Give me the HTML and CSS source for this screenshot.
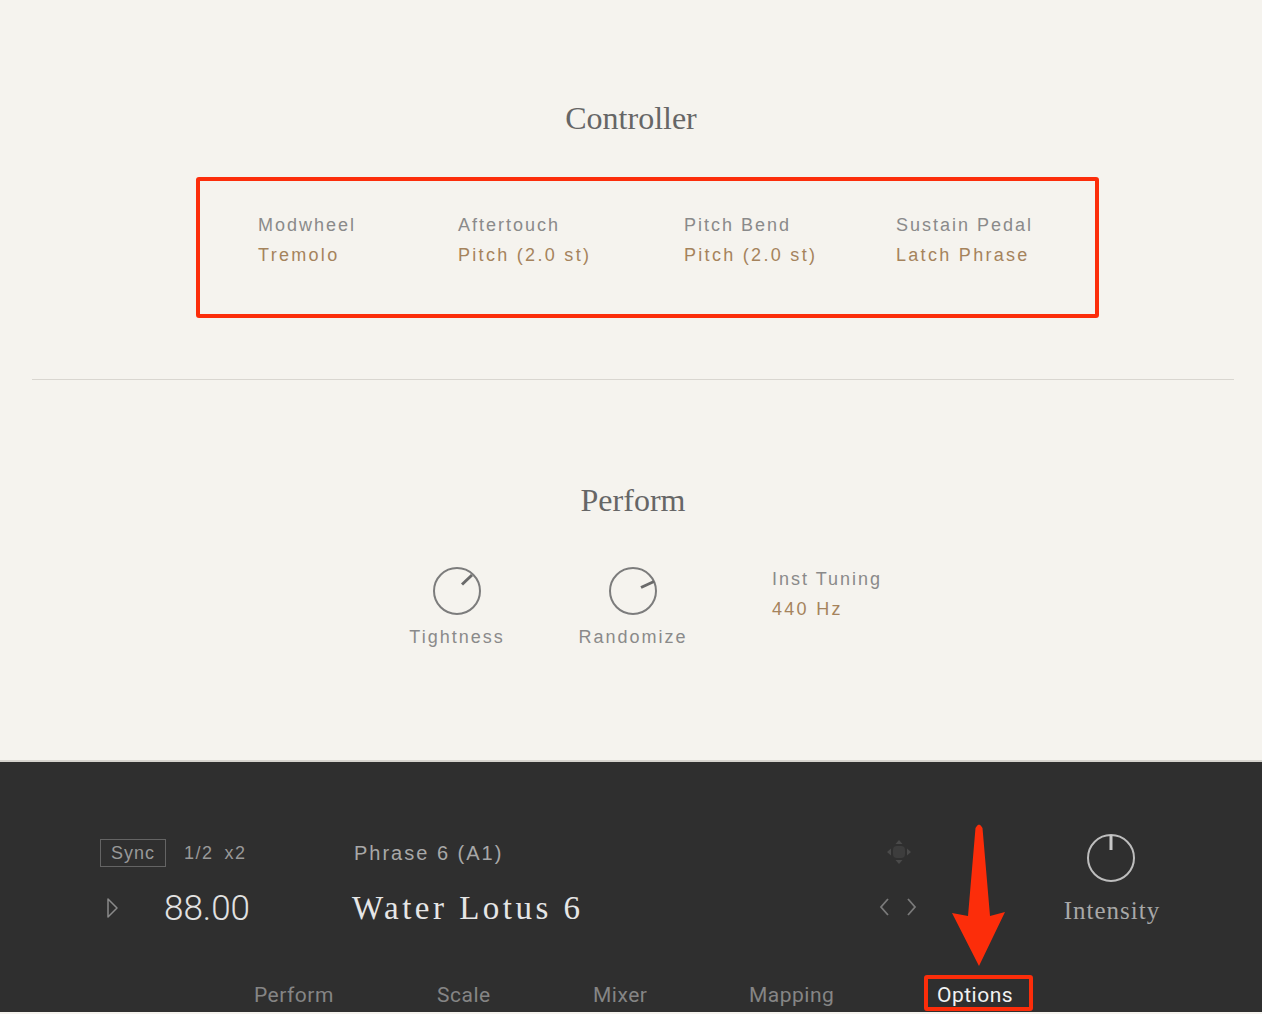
FILE: index.html
```html
<!DOCTYPE html>
<html lang="en">
<head>
<meta charset="UTF-8">
<meta name="viewport" content="width=device-width, initial-scale=1.0">
<title>Options</title>
<link rel="stylesheet" href="styles.css">
</head>
<body>

<div class="options">
  <h2 class="section-title">Controller</h2>

  <!-- MIDI controller assignments -->
  <div class="controllers">
    <div class="param">
      <div class="param-label">Modwheel</div>
      <div class="param-value">Tremolo</div>
    </div>
    <div class="param">
      <div class="param-label">Aftertouch</div>
      <div class="param-value">Pitch (2.0 st)</div>
    </div>
    <div class="param">
      <div class="param-label">Pitch Bend</div>
      <div class="param-value">Pitch (2.0 st)</div>
    </div>
    <div class="param">
      <div class="param-label">Sustain Pedal</div>
      <div class="param-value">Latch Phrase</div>
    </div>
  </div>

  <hr class="divider">

  <h2 class="section-title perform-title">Perform</h2>

  <div class="perform-row">
    <div class="knob">
      <svg width="52" height="52" viewBox="0 0 52 52">
        <circle cx="26" cy="27" r="23" fill="none" stroke="#7c7c7c" stroke-width="2"/>
        <line x1="31" y1="20.5" x2="41" y2="11" stroke="#6a6a6a" stroke-width="3"/>
      </svg>
      <div class="knob-label">Tightness</div>
    </div>
    <div class="knob knob-second">
      <svg width="52" height="52" viewBox="0 0 52 52">
        <circle cx="26" cy="27" r="23" fill="none" stroke="#7c7c7c" stroke-width="2"/>
        <line x1="34" y1="23.5" x2="47" y2="17.5" stroke="#6a6a6a" stroke-width="3"/>
      </svg>
      <div class="knob-label">Randomize</div>
    </div>
    <div class="param tuning">
      <div class="param-label">Inst Tuning</div>
      <div class="param-value">440 Hz</div>
    </div>
  </div>
</div>

<div class="panel">
  <div class="panel-top">
    <div class="transport">
      <div class="row-small">
        <span class="sync">Sync</span>
        <span class="rate">1/2</span>
        <span class="rate rate-mult">x2</span>
      </div>
      <div class="row-large">
        <svg class="play" width="14" height="22" viewBox="0 0 14 22">
          <path d="M2,2 L11,11 L2,20 Z" fill="none" stroke="#8a8a8a" stroke-width="1.5" stroke-linejoin="round"/>
        </svg>
        <span class="tempo">88.00</span>
      </div>
    </div>

    <div class="phrase">
      <div class="row-small phrase-name">Phrase 6 (A1)</div>
      <div class="row-large phrase-title">Water Lotus 6</div>
    </div>

    <div class="nav">
      <div class="row-small">
        <!-- move handle: rounded pad with four arrowheads -->
        <svg width="30" height="30" viewBox="0 0 30 30">
          <rect x="9" y="9" width="12" height="12" rx="4" fill="#3d3d3d"/>
          <path d="M15,3 L18.5,7 L11.5,7 Z M15,27 L18.5,23 L11.5,23 Z M3,15 L7,11.5 L7,18.5 Z M27,15 L23,11.5 L23,18.5 Z" fill="#4a4a4a"/>
        </svg>
      </div>
      <div class="row-large">
        <svg width="40" height="22" viewBox="0 0 40 22">
          <path d="M9,3 L2,11 L9,19" fill="none" stroke="#7a7a7a" stroke-width="1.8"/>
          <path d="M29,3 L36,11 L29,19" fill="none" stroke="#7a7a7a" stroke-width="1.8"/>
        </svg>
      </div>
    </div>

    <div class="intensity">
      <svg width="50" height="50" viewBox="0 0 50 50">
        <circle cx="25" cy="25" r="23" fill="none" stroke="#bdbdbd" stroke-width="2"/>
        <line x1="25" y1="2" x2="25" y2="17" stroke="#c8c8c8" stroke-width="3"/>
      </svg>
      <div class="intensity-label">Intensity</div>
    </div>
  </div>

  <nav class="tabs">
    <span class="tab">Perform</span>
    <span class="tab">Scale</span>
    <span class="tab">Mixer</span>
    <span class="tab">Mapping</span>
    <span class="tab tab-active">Options<span class="highlight"></span></span>
  </nav>

  <!-- callout arrow pointing at the Options tab -->
  <svg class="callout-arrow" width="62" height="150" viewBox="0 0 62 150">
    <path d="M27.5,8 Q31,1 34.5,8 L42,96 L57,92 L31,146 L4,93 L20,96 Z" fill="#fc2d0a"/>
  </svg>
</div>

</body>
</html>
```

FILE: styles.css
```css
body {
  margin: 0;
  padding: 0;
  background-color: #f5f3ee;
  font-family: "Liberation Sans", Arial, sans-serif;
}
.options {
  height: 760px;
  padding-top: 100px;
  box-sizing: border-box;
}
.section-title {
  margin: 0;
  font-family: "Liberation Serif", "Times New Roman", serif;
  font-weight: normal;
  font-size: 32px;
  line-height: 36px;
  color: #666;
  text-align: center;
}
.controllers {
  display: grid;
  grid-template-columns: 200px 226px 212px auto;
  width: 903px;
  height: 141px;
  box-sizing: border-box;
  margin: 41px 0 0 196px;
  padding: 29px 0 0 58px;
  border: 4px solid #fc2d0a;
  border-radius: 3px;
}
.param {
  font-size: 18px;
  letter-spacing: 2px;
  line-height: 30px;
}
.param-label {
  color: #8a8a8a;
}
.param-value {
  color: #a5835c;
  letter-spacing: 2.3px;
}
.divider {
  margin: 61px 28px 0 32px;
  border: none;
  border-top: 1px solid #d9d6d0;
}
.perform-title {
  margin-top: 102px;
  padding-left: 4px;
}
.perform-row {
  display: flex;
  align-items: flex-start;
  margin-top: 46px;
  padding-left: 397px;
}
.knob {
  width: 120px;
  display: flex;
  flex-direction: column;
  align-items: center;
}
.knob-second {
  margin-left: 56px;
}
.knob-label {
  margin-top: 9px;
  font-size: 18px;
  letter-spacing: 2px;
  line-height: 24px;
  color: #8a8a8a;
}
.tuning {
  margin-left: 79px;
}

.panel {
  position: relative;
  height: 252px;
  border-top: 2px solid #d6d4ce;
  background-color: #2f2f2f;
  padding: 76px 0 0 100px;
  box-sizing: border-box;
}
.panel-top {
  display: flex;
  align-items: flex-start;
}
.row-small {
  display: flex;
  align-items: center;
  height: 30px;
}
.row-large {
  display: flex;
  align-items: center;
  height: 40px;
  margin-top: 20px;
}
.transport {
  width: 252px;
}
.sync {
  height: 28px;
  box-sizing: border-box;
  padding: 0 10px;
  border: 1px solid #646464;
  font-size: 18px;
  letter-spacing: 1px;
  line-height: 26px;
  color: #999;
}
.rate {
  margin-left: 18px;
  font-size: 18px;
  letter-spacing: 1.5px;
  color: #999;
}
.rate-mult {
  margin-left: 11px;
}
.play {
  margin-left: 6px;
}
.tempo {
  margin-left: 44px;
  font-family: Roboto, "Liberation Sans", sans-serif;
  font-weight: 300;
  font-size: 35px;
  color: #e2e2e2;
}
.phrase {
  width: 520px;
}
.phrase-name {
  padding-left: 2px;
  font-size: 20px;
  letter-spacing: 2px;
  color: #a8a8a8;
}
.phrase-title {
  font-family: "Liberation Serif", "Times New Roman", serif;
  font-size: 33px;
  letter-spacing: 3.5px;
  color: #e6e6e6;
}
.nav {
  width: 54px;
}
.nav .row-small, .nav .row-large {
  justify-content: center;
}
.nav .row-small {
  margin-top: -1px;
}
.intensity {
  width: 122px;
  margin: -5px 0 0 124px;
  display: flex;
  flex-direction: column;
  align-items: center;
}
.intensity-label {
  margin-top: 13px;
  padding-left: 2px;
  font-family: "Liberation Serif", "Times New Roman", serif;
  font-size: 25px;
  letter-spacing: 1px;
  line-height: 30px;
  color: #a8a8a8;
}
.tabs {
  display: grid;
  grid-template-columns: 183px 156px 156px 188px auto;
  margin-top: 52px;
  padding-left: 154px;
}
.tab {
  font-family: Roboto, "Liberation Sans", sans-serif;
  font-size: 21px;
  letter-spacing: 0.5px;
  line-height: 30px;
  color: #858585;
}
.tab-active {
  position: relative;
  justify-self: start;
  color: #f2f2f2;
}
.highlight {
  position: absolute;
  top: -5px;
  right: -20px;
  bottom: -1px;
  left: -13px;
  border: 4px solid #fc2d0a;
  border-radius: 3px;
}
.callout-arrow {
  position: absolute;
  left: 948px;
  top: 58px;
}
```
